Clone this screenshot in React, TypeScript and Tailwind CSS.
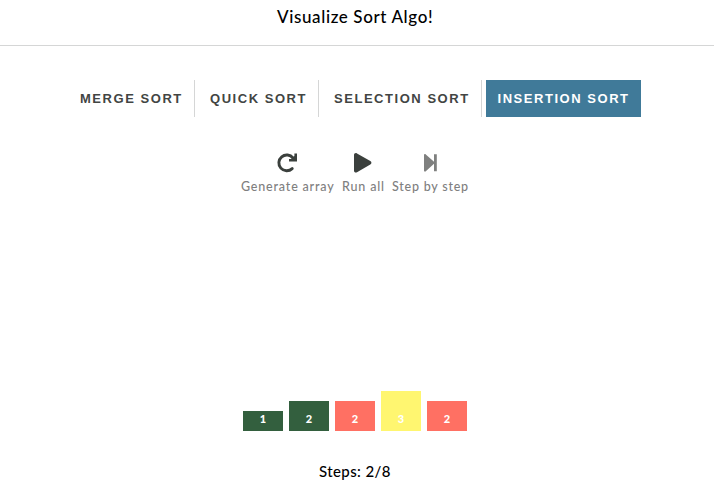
const tabs = [
  { label: "MERGE SORT", width: "w-[127px] pl-3", active: false },
  { label: "QUICK SORT", width: "w-[120px] pl-[11px]", active: false },
  { label: "SELECTION SORT", width: "w-[159px] pl-[11px]", active: false },
  { label: "INSERTION SORT", width: "w-[155px] pl-[11.5px]", active: true },
];

const bars = [
  { value: 1, style: "h-5 bg-[#335f3e]" },
  { value: 2, style: "h-[30px] bg-[#335f3e]" },
  { value: 2, style: "h-[30px] bg-[#ff7063]" },
  { value: 3, style: "h-10 bg-[#fff670]" },
  { value: 2, style: "h-[30px] bg-[#ff7063]" },
];

function RotateIcon() {
  return (
    <svg width="20" height="20" viewBox="0 0 20 20" fill="none" stroke="#3b403d">
      <path d="M15.2 15.6A7.9 7.9 0 1 1 16 5" strokeWidth="2.9" strokeLinecap="round" />
      <path d="M17.4 .5H20V8.5H12V6H14.2L17.4 3Z" fill="#3b403d" stroke="none" />
    </svg>
  );
}

function PlayIcon() {
  return (
    <svg width="18" height="20" viewBox="0 0 18 20" fill="#3b403d">
      <path d="M0 2C0 .4 1.6-.4 3 .4L16.3 8.1C17.8 9 17.8 10.7 16.3 11.5L3 19.2C1.6 20 0 19.3 0 17.7Z" />
    </svg>
  );
}

function StepIcon() {
  return (
    <svg width="13" height="20" viewBox="0 0 13 20" fill="#7f807f">
      <path d="M0 2.2C0 1.2 1 .7 1.8 1.4L10 8.8V1.2H12.8V18.2H10V10.8L1.8 18.3C1 19 0 18.5 0 17.5Z" />
    </svg>
  );
}

export default function App() {
  return (
    <main className="h-[489px] w-[714px] overflow-hidden bg-white font-[Lato,sans-serif] text-black">
      <header className="flex h-[46px] justify-center border-b border-[#d5d6d6] pt-[5px]">
        <h1 className="h-6 w-[160px] whitespace-nowrap text-[17px] font-medium leading-6 tracking-[0.62px]">Visualize Sort Algo!</h1>
      </header>
      <nav className="mt-[34px] flex gap-1 pl-[68px] font-['Liberation_Sans',Arial,sans-serif]">
        {tabs.map((t) => (
          <button
            key={t.label}
            className={`${t.width} h-[37px] whitespace-nowrap text-left text-[13px] font-bold tracking-[1.54px] ${
              t.active ? "bg-[#407a99] text-white" : "border-r border-[#d5d6d6] text-[#424543]"
            }`}
          >
            {t.label}
          </button>
        ))}
      </nav>
      <section className="mt-9 flex pl-[241px] text-[12.5px] font-medium leading-4 text-[#7f807f]">
        <button className="flex w-[101px] flex-col items-start">
          <span className="pl-9"><RotateIcon /></span>
          <span className="mt-1.5 whitespace-nowrap tracking-[0.82px]">Generate array</span>
        </button>
        <button className="flex w-[50px] flex-col items-start">
          <span className="pl-3"><PlayIcon /></span>
          <span className="mt-1.5 whitespace-nowrap tracking-[0.85px]">Run all</span>
        </button>
        <button className="flex flex-col items-start">
          <span className="pl-8"><StepIcon /></span>
          <span className="mt-1.5 whitespace-nowrap tracking-[0.78px]">Step by step</span>
        </button>
      </section>
      <section className="mt-[196px] flex h-10 items-end gap-1.5 pl-[243px]">
        {bars.map((b, i) => (
          <div key={i} className={`flex w-10 items-end justify-center pb-1 text-[11px] font-black leading-4 text-white ${b.style}`}>
            {b.value}
          </div>
        ))}
      </section>
      <p className="mt-7 pl-[319px] text-[15px] font-medium leading-6 tracking-[0.4px]">Steps: 2/8</p>
    </main>
  );
}
